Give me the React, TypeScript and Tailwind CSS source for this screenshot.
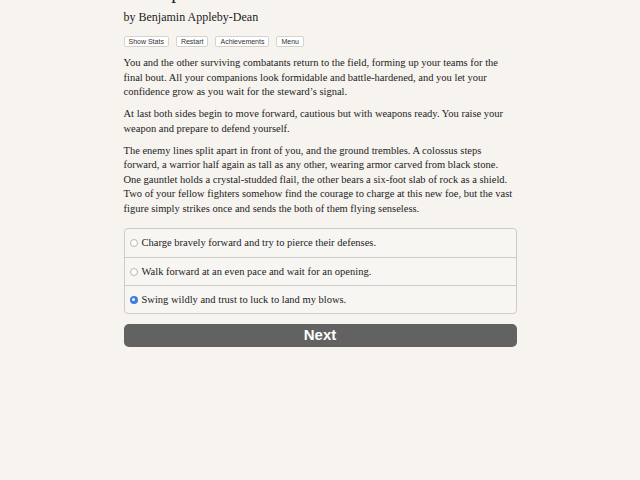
import { useState } from 'react';

const choices = [
  'Charge bravely forward and try to pierce their defenses.',
  'Walk forward at an even pace and wait for an opening.',
  'Swing wildly and trust to luck to land my blows.',
];

const paragraphs = [
  "You and the other surviving combatants return to the field, forming up your teams for the final bout. All your companions look formidable and battle-hardened, and you let your confidence grow as you wait for the steward\u2019s signal.",
  'At last both sides begin to move forward, cautious but with weapons ready. You raise your weapon and prepare to defend yourself.',
  'The enemy lines split apart in front of you, and the ground trembles. A colossus steps forward, a warrior half again as tall as any other, wearing armor carved from black stone. One gauntlet holds a crystal-studded flail, the other bears a six-foot slab of rock as a shield. Two of your fellow fighters somehow find the courage to charge at this new foe, but the vast figure simply strikes once and sends the both of them flying senseless.',
];

function MenuButton({ label }: { label: string }) {
  return (
    <button className="h-[11px] px-[4px] text-[7px] leading-[9px] text-[#333] bg-white border border-[#d6d3cf] rounded-[2px] font-['Liberation_Sans',sans-serif]">
      {label}
    </button>
  );
}

export default function App() {
  const [selected, setSelected] = useState(2);

  return (
    <div className="min-h-[480px] w-full overflow-hidden bg-[#f7f4f0] text-[#222] font-['Liberation_Serif',serif]">
      <div className="w-[393px] mx-auto">
        <h1 className="mt-[-21px] text-[20px] leading-[24px] font-normal">Champion of the Gods</h1>
        <div className="mt-[6px] text-[12px] leading-[16px]">by Benjamin Appleby-Dean</div>

        <div className="mt-[11px] flex gap-[7px]">
          <MenuButton label="Show Stats" />
          <MenuButton label="Restart" />
          <MenuButton label="Achievements" />
          <MenuButton label="Menu" />
        </div>

        <div className="mt-[9px] flex flex-col gap-[7.5px] text-[10.5px] leading-[14.5px]">
          {paragraphs.map((p, i) => (
            <p key={i}>{p}</p>
          ))}
        </div>

        <div className="mt-[12px] border border-[#cfcbc7] rounded-[4px] bg-[#f8f6f3]">
          {choices.map((c, i) => (
            <label
              key={i}
              onClick={() => setSelected(i)}
              className={`flex items-center h-[28px] px-[5px] gap-[4px] text-[10.5px] cursor-pointer ${
                i > 0 ? 'border-t border-[#cfcbc7]' : ''
              }`}
            >
              {selected === i ? (
                <span className="w-[8px] h-[8px] rounded-full bg-[#3b7de0] flex items-center justify-center">
                  <span className="w-[3px] h-[3px] rounded-full bg-white" />
                </span>
              ) : (
                <span className="w-[8px] h-[8px] rounded-full border border-[#b9b6b3] bg-white" />
              )}
              <span>{c}</span>
            </label>
          ))}
        </div>

        <button className="mt-[10px] w-full h-[23px] rounded-[5px] bg-[#626262] text-white text-[15px] font-bold font-['Liberation_Sans',sans-serif]">
          Next
        </button>
      </div>
    </div>
  );
}
